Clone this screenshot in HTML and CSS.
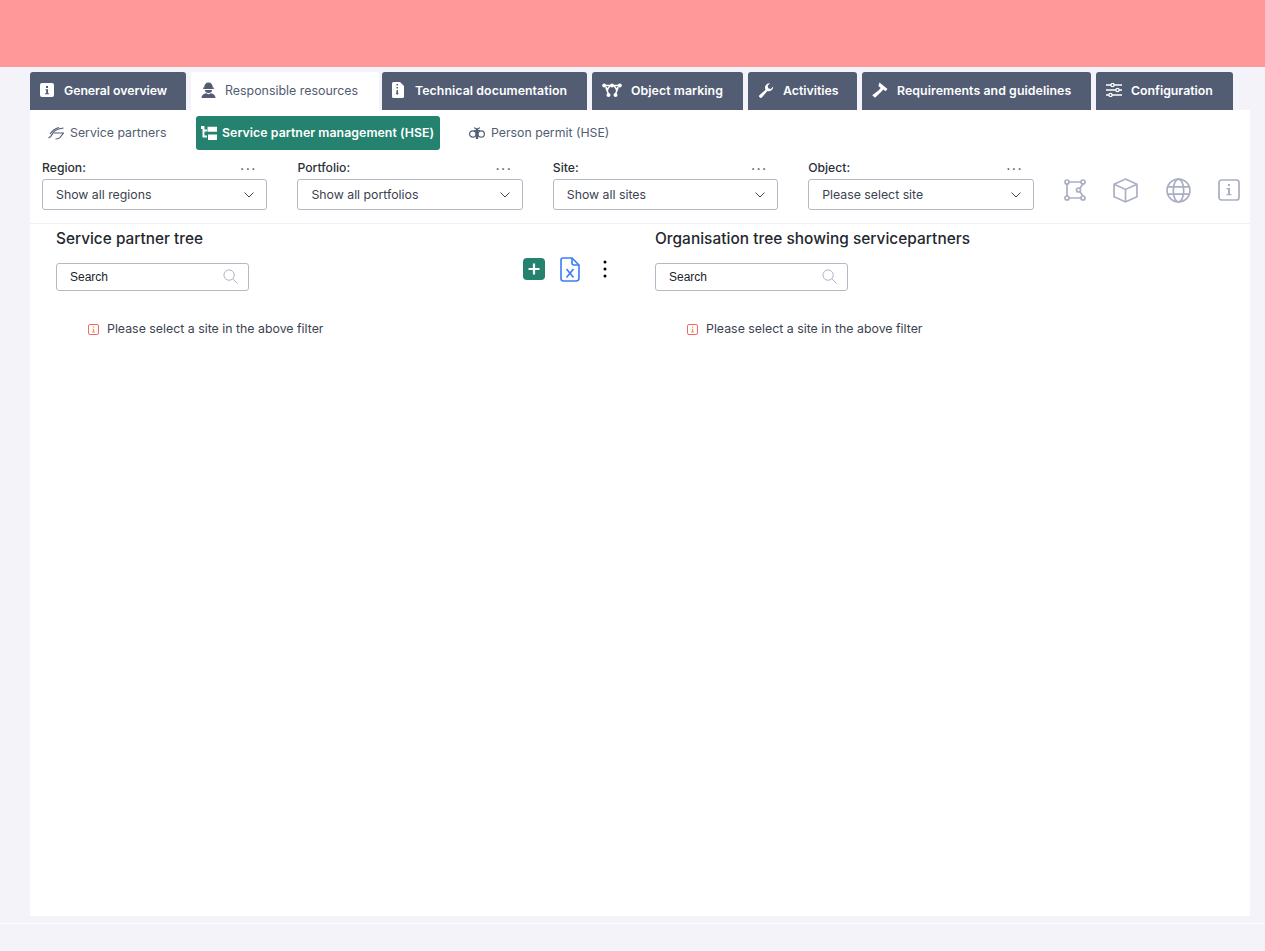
FILE: index.html
```html
<!DOCTYPE html>
<html lang="en">
<head>
<meta charset="utf-8">
<title>Responsible resources</title>
<link rel="stylesheet" href="styles.css">
</head>
<body>
<header class="topbar"></header>
<nav class="tabs">
  <a class="tab t1"><svg class="ticon i-info" viewBox="0 0 14 14"><rect width="14" height="14" rx="2" fill="#fff"/><path d="M6 3h2v2H6zM5.500 6.200H8v4h1v1H5v-1h1.200V7.200h-.7z" fill="#525c73"/></svg><span>General overview</span></a>
  <a class="tab t2 active"><svg class="ticon i-worker" viewBox="0 0 15 16"><path d="M3.200 5.500C3.200 2.500 4.800.5 7.500.5s4.300 2 4.300 5h1V7H2.200V5.500z" fill="#525c73"/><path d="M4 8h7a3.500 3 0 0 1-7 0zM.5 16c0-2.800 2.300-4.300 4.500-4.700l2.500 1 2.500-1c2.200.4 4.500 1.900 4.500 4.700z" fill="#525c73"/></svg><span>Responsible resources</span></a>
  <a class="tab t3"><svg class="ticon i-doc" viewBox="0 0 12 16"><path d="M1.500 0H8l4 4v10.500a1.500 1.500 0 0 1-1.500 1.500h-9A1.500 1.500 0 0 1 0 14.500v-13A1.500 1.500 0 0 1 1.500 0z" fill="#fff"/><path d="M4.500 2h1.500v1.500H4.500zM4.500 5h1.500v1.500H4.500zM4.500 8h1.500v2.500a1.200 1.200 0 1 1-1.500 0z" fill="#525c73"/></svg><span>Technical documentation</span></a>
  <a class="tab t4"><svg class="ticon i-curve" viewBox="0 0 20 14" fill="none" stroke="#fff" stroke-width="1.600"><path d="M3 2.500h14M4 4c.5 3 2 5 2.500 7.500M16 4c-.5 3-2 5-2.500 7.500M8 3c-1.500 1.200-2.500 3-2.800 5M12 3c1.500 1.200 2.500 3 2.800 5"/><g fill="#fff" stroke="none"><circle cx="2.200" cy="2.500" r="2"/><circle cx="17.800" cy="2.500" r="2"/><circle cx="10" cy="2.500" r="2"/><circle cx="6.500" cy="12" r="2"/><circle cx="13.500" cy="12" r="2"/></g></svg><span>Object marking</span></a>
  <a class="tab t5"><svg class="ticon i-wrench" viewBox="0 0 16 16"><path d="M15.700 3.800a4.700 4.700 0 0 1-6.200 4.700L3.800 15.300a1.900 1.900 0 0 1-3.100-2l6.800-6.100A4.700 4.700 0 0 1 12.300.300L9.800 3l.6 2.700 2.700.6z" fill="#fff"/></svg><span>Activities</span></a>
  <a class="tab t6"><svg class="ticon i-gavel" viewBox="0 0 16 16"><path d="M7.500.5l8 6.500-2 2.200-2.200-1.800-2 2.400L3 15.800.2 13.300l6.500-5.100 2-2.300L6.400 4z" fill="#fff"/></svg><span>Requirements and guidelines</span></a>
  <a class="tab t7"><svg class="ticon i-sliders" viewBox="0 0 16 14" fill="none" stroke="#fff" stroke-width="1.600"><path d="M0 2h16M0 7h16M0 12h16"/><g fill="#525c73" stroke-width="1.300"><circle cx="6.500" cy="2" r="1.600"/><circle cx="11.500" cy="7" r="1.600"/><circle cx="4.500" cy="12" r="1.600"/></g></svg><span>Configuration</span></a>
</nav>
<main class="panel">
  <div class="subtabs">
    <a class="subtab st1"><svg class="sicon" viewBox="0 0 16 14" fill="none" stroke="#525c73" stroke-width="1.200"><path d="M.5 12C3 11 4 9 5 7c1-2 3-4 10.500-5"/><path d="M2 8c2-3 4-5 9-6.500"/><path d="M6 7h9.500L12 11.500C11 13 9 13 7.500 13"/></svg><span>Service partners</span></a>
    <a class="subtab st2 current"><svg class="sicon" viewBox="0 0 16 14"><path d="M0 0h3.500v9.500H6v2H1.500V3H0z" fill="#fff"/><path d="M3 3.500h3v2H3z" fill="#fff"/><path d="M6.500 .8h9.500v5H6.500zM7 8.500h9v5.500H7z" fill="#fff"/></svg><span>Service partner management (HSE)</span></a>
    <a class="subtab st3"><svg class="sicon" viewBox="0 0 16 12" fill="none" stroke="#525c73" stroke-width="1.200"><circle cx="3.800" cy="7" r="3.200"/><circle cx="12.200" cy="7" r="3.200"/><path d="M8 2 5 .8M8 2l3-1.200M5 3.500h6"/><path d="M8 2v10" stroke-width="2.400"/></svg><span>Person permit (HSE)</span></a>
  </div>
  <section class="filters">
    <div class="filter"><div class="flabel"><span>Region:</span><span class="dots">• • •</span></div><div class="select"><span>Show all regions</span><svg class="chev" viewBox="0 0 10 6"><path d="M.5.500 5 5 9.500.500" fill="none" stroke="#3c4557"/></svg></div></div>
    <div class="filter"><div class="flabel"><span>Portfolio:</span><span class="dots">• • •</span></div><div class="select"><span>Show all portfolios</span><svg class="chev" viewBox="0 0 10 6"><path d="M.5.500 5 5 9.500.500" fill="none" stroke="#3c4557"/></svg></div></div>
    <div class="filter"><div class="flabel"><span>Site:</span><span class="dots">• • •</span></div><div class="select"><span>Show all sites</span><svg class="chev" viewBox="0 0 10 6"><path d="M.5.500 5 5 9.500.500" fill="none" stroke="#3c4557"/></svg></div></div>
    <div class="filter"><div class="flabel"><span>Object:</span><span class="dots">• • •</span></div><div class="select"><span>Please select site</span><svg class="chev" viewBox="0 0 10 6"><path d="M.5.500 5 5 9.500.500" fill="none" stroke="#3c4557"/></svg></div></div>
    <div class="views">
      <svg class="vicon v-small" viewBox="0 0 22 22"><g fill="none" stroke="#a9aec2" stroke-width="1.700"><path d="M5 3h12M3 5v12M5 19h12M19 5l-3 4M16 13l3 4"/><circle cx="3" cy="3" r="2"/><circle cx="19" cy="3" r="2"/><circle cx="3" cy="19" r="2"/><circle cx="19" cy="19" r="2"/><circle cx="14.500" cy="11" r="2"/></g></svg>
      <svg class="vicon v-big" viewBox="0 0 24 24"><g fill="none" stroke="#a9aec2" stroke-width="1.600"><path d="M12 1 23 6v12l-11 5-11-5V6z"/><path d="M1 6l11 5 11-5M12 11v12"/></g></svg>
      <svg class="vicon v-big" viewBox="0 0 24 24"><g fill="none" stroke="#a9aec2" stroke-width="1.600"><circle cx="12" cy="12" r="11"/><ellipse cx="12" cy="12" rx="5" ry="11"/><path d="M1.500 8.500h21M1.500 15.500h21"/></g></svg>
      <svg class="vicon v-small" viewBox="0 0 22 22"><rect x="1" y="1" width="20" height="20" rx="2.500" fill="none" stroke="#a9aec2" stroke-width="1.700"/><path d="M10 5h2v2h-2zM8.500 9H12v6h1.500v1.200h-5V15H10v-4.800H8.500z" fill="#a9aec2"/></svg>
    </div>
  </section>
  <section class="columns">
    <div class="col col-left">
      <h2 class="ctitle">Service partner tree</h2>
      <div class="crow">
        <div class="search"><span>Search</span><svg class="mag" viewBox="0 0 16 16"><circle cx="6.500" cy="6.500" r="5.500" fill="none" stroke="#a9aec2"/><path d="M10.500 10.500 15.500 15.500" stroke="#a9aec2"/></svg></div>
        <div class="actions">
          <svg class="a-plus" viewBox="0 0 22 22"><rect width="22" height="22" rx="4" fill="#24826e"/><path d="M9.900 5.500h2.200v4.400h4.400v2.200h-4.400v4.400H9.900v-4.400H5.500V9.900h4.400z" fill="#fff"/></svg>
          <svg class="a-xls" viewBox="0 0 20 25" fill="none" stroke="#3b7cf5" stroke-width="1.600"><path d="M3 1h9l7 7v13a3 3 0 0 1-3 3H3.500A2.500 2.500 0 0 1 1 21.500V3a2 2 0 0 1 2-2z"/><path d="M12 1v5a2 2 0 0 0 2 2h5M6.500 12l7 8.500M13.500 12l-7 8.500"/></svg>
          <svg class="a-more" viewBox="0 0 4 18"><circle cx="2" cy="2" r="1.500"/><circle cx="2" cy="9" r="1.500"/><circle cx="2" cy="16" r="1.500"/></svg>
        </div>
      </div>
      <p class="msg"><svg class="micon" viewBox="0 0 11 11"><rect x=".5" y=".5" width="10" height="10" rx="1.500" fill="none" stroke="#f0686e"/><path d="M5 2.500h1.200v1.200H5zM4.500 4.800h1.700v2.800h.8v.8H4v-.8h1V5.600h-.5z" fill="#e8a04c"/></svg><span>Please select a site in the above filter</span></p>
    </div>
    <div class="col col-right">
      <h2 class="ctitle">Organisation tree showing servicepartners</h2>
      <div class="crow">
        <div class="search"><span>Search</span><svg class="mag" viewBox="0 0 16 16"><circle cx="6.500" cy="6.500" r="5.500" fill="none" stroke="#a9aec2"/><path d="M10.500 10.500 15.500 15.500" stroke="#a9aec2"/></svg></div>
      </div>
      <p class="msg"><svg class="micon" viewBox="0 0 11 11"><rect x=".5" y=".5" width="10" height="10" rx="1.500" fill="none" stroke="#f0686e"/><path d="M5 2.500h1.200v1.200H5zM4.500 4.800h1.700v2.800h.8v.8H4v-.8h1V5.600h-.5z" fill="#e8a04c"/></svg><span>Please select a site in the above filter</span></p>
    </div>
  </section>
</main>
<div class="footline"></div>
</body>
</html>
```
FILE: styles.css
```css
* { box-sizing: border-box; }
html, body { margin: 0; height: 951px; overflow: hidden; }
body { background: #f3f3f9; font-family: Inter, "Noto Sans", sans-serif; color: #2b2f38; }
.topbar { height: 67px; background: #ff9999; }
.tabs { display: flex; margin: 5px 0 0 30px; height: 38px; }
.tab { display: flex; align-items: flex-start; padding: 11px 0 0 10px; height: 38px; background: #525c73; color: #fff; border-radius: 3px 3px 0 0; font-size: 12.300px; font-weight: 600; line-height: 15px; white-space: nowrap; }
.tab span { margin-left: 9px; }
.tab.active { background: #fff; color: #525c73; font-weight: 400; font-size: 12.400px; }
.ticon { flex: none; }
.i-info { width: 14px; height: 14px; margin-right: 1px; }
.i-worker { width: 15px; height: 16px; margin-top: -1px; }
.i-doc { width: 12px; height: 16px; margin-top: -1px; margin-right: 2px; }
.i-curve { width: 20px; height: 14px; }
.i-wrench { width: 16px; height: 15px; }
.i-gavel { width: 16px; height: 16px; margin-top: -1px; }
.i-sliders { width: 16px; height: 14px; }
.t1 { width: 156px; margin-right: 5px; letter-spacing: -.05px; }
.t2 { width: 188px; margin-right: 3px; }
.t3 { width: 205px; margin-right: 5px; letter-spacing: .08px; }
.t4 { width: 151px; margin-right: 5px; letter-spacing: .08px; }
.t5 { width: 109px; margin-right: 5px; }
.t6 { width: 229px; margin-right: 5px; letter-spacing: .08px; }
.t7 { width: 137px; }
.panel { margin-left: 30px; width: 1220px; height: 806px; background: #fff; }
.subtabs { display: flex; align-items: flex-start; height: 46px; padding: 6px 0 0 18px; }
.subtab { display: flex; align-items: center; height: 34px; padding-bottom: 1px; font-size: 12.300px; color: #525c73; white-space: nowrap; }
.subtab span { margin-left: 6px; }
.sicon { width: 16px; height: 14px; flex: none; }
.st1 { width: 148px; }
.st2 { width: 244px; padding-left: 5px; background: #24826e; color: #fff; font-weight: 600; border-radius: 3px; letter-spacing: .06px; }
.st2 span { margin-left: 5px; }
.st3 { margin-left: 29px; }
.filters { display: flex; height: 68px; padding: 4px 0 0 12px; border-bottom: 1px solid #f1f1f4; }
.filter { width: 225.400px; margin-right: 30px; }
.flabel { display: flex; justify-content: space-between; align-items: flex-start; height: 19px; line-height: 15px; font-size: 12.200px; font-weight: 500; padding-right: 12px; }
.dots { font-size: 6px; line-height: 18px; letter-spacing: .4px; color: #4a5060; }
.select { display: flex; justify-content: space-between; align-items: center; height: 31px; padding: 0 12px 0 13px; border: 1px solid #b4b9c6; border-radius: 3px; font-size: 12.300px; color: #3c4250; }
.chev { width: 10px; height: 6px; }
.views { display: flex; align-items: center; gap: 27.500px; height: 60px; }
.vicon { flex: none; }
.v-small { width: 22px; height: 22px; }
.v-big { width: 25px; height: 25px; }
.columns { display: flex; padding: 6px 0 0 26px; }
.col-left { width: 599px; }
.ctitle { margin: 0; height: 20px; font-size: 15.400px; line-height: 17px; font-weight: 500; color: #24272e; letter-spacing: .04px; }
.col-left .ctitle { font-size: 15.300px; }
.crow { display: flex; justify-content: space-between; margin-top: 13px; width: 551px; height: 58px; }
.search { display: flex; justify-content: space-between; align-items: center; width: 193px; height: 28px; padding: 0 10px 1px 13px; border: 1px solid #b4b9c6; border-radius: 3px; font-family: "Liberation Sans", Arial, sans-serif; font-size: 12px; line-height: 24px; color: #20242c; }
.mag { width: 15px; height: 15px; }
.actions { display: flex; align-items: flex-start; margin-top: -5px; height: 30px; }
.a-plus { width: 22px; height: 22px; }
.a-xls { width: 20px; height: 25px; margin: -1px 0 0 15px; }
.a-more { width: 4px; height: 18px; margin: 2px 0 0 23px; }
.msg { display: flex; align-items: center; margin: 0 0 0 32px; font-size: 12.350px; line-height: 16px; color: #3c4250; }
.micon { width: 11px; height: 11px; flex: none; }
.msg span { margin-left: 8px; }
.footline { height: 1px; margin-top: 7px; background: #fff; }
```
